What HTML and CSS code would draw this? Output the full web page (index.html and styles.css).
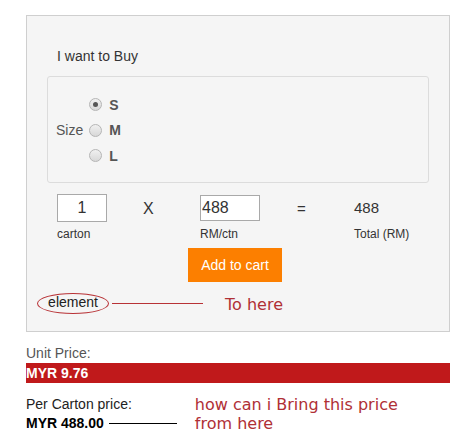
FILE: index.html
```html
<!DOCTYPE html>
<html lang="en">
<head>
    <meta charset="UTF-8">
    <meta name="viewport" content="width=device-width, initial-scale=1.0">
    <title>Buy Product</title>
    <link rel="stylesheet" href="styles.css">
</head>
<body>
    <div class="page">
        <div class="buy-box">
            <div class="buy-title">I want to Buy</div>

            <div class="options">
                <div class="size-group">
                    <span class="size-label">Size</span>
                    <div class="size-list">
                        <label class="size-item"><input type="radio" name="size" checked> S</label>
                        <label class="size-item"><input type="radio" name="size"> M</label>
                        <label class="size-item"><input type="radio" name="size"> L</label>
                    </div>
                </div>
            </div>

            <div class="calc">
                <div class="calc-cell cell-qty">
                    <input type="text" class="qty" value="1">
                    <span class="calc-note">carton</span>
                </div>
                <div class="calc-cell cell-op">X</div>
                <div class="calc-cell cell-rate">
                    <input type="text" class="rate" value="488">
                    <span class="calc-note">RM/ctn</span>
                </div>
                <div class="calc-cell cell-eq">=</div>
                <div class="calc-cell cell-total">
                    <span class="total">488</span>
                    <span class="calc-note">Total (RM)</span>
                </div>
            </div>

            <button class="add-cart">Add to cart</button>

            <div class="note-row">
                <span class="element-tag">element</span>
                <span class="arrow-line"></span>
                <span class="note">To here</span>
            </div>
        </div>

        <div class="unit-label">Unit Price:</div>
        <div class="unit-bar">MYR 9.76</div>

        <div class="carton">
            <div class="carton-left">
                <div class="carton-label">Per Carton price:</div>
                <div class="carton-value">
                    <span>MYR 488.00</span>
                    <span class="black-line"></span>
                </div>
            </div>
            <div class="note question">how can i Bring this price<br>from here</div>
        </div>
    </div>
</body>
</html>
```

FILE: styles.css
```css
body {
    margin: 0;
    padding: 0;
    background-color: #fff;
    font-family: "Liberation Sans", Arial, sans-serif;
    font-size: 14px;
    color: #333;
}

.page {
    padding: 15px 0 0 26px;
    width: 424px;
}

.buy-box {
    box-sizing: border-box;
    width: 424px;
    height: 317px;
    background-color: #f5f5f5;
    border: 1px solid #cfcfcf;
    padding: 31px 0 0 0;
}

.buy-title {
    margin-left: 30px;
    line-height: 18px;
    color: #333;
}

.options {
    box-sizing: border-box;
    margin: 11px 0 0 20px;
    width: 382px;
    height: 107px;
    border: 1px solid #dcdcdc;
    border-radius: 3px;
    padding: 15px 0 0 8px;
}

.size-group {
    display: flex;
    align-items: center;
}

.size-label {
    color: #555;
    margin-right: 6px;
}

.size-list {
    display: flex;
    flex-direction: column;
}

.size-item {
    display: flex;
    align-items: center;
    height: 25.5px;
    font-weight: bold;
    color: #555;
}

.size-item input {
    -webkit-appearance: none;
    appearance: none;
    width: 13px;
    height: 13px;
    margin: 0 7px 0 0;
    border: 1px solid #b5b5b5;
    border-radius: 50%;
    background: linear-gradient(#f0f0f0, #d8d8d8);
    box-sizing: border-box;
    position: relative;
}

.size-item input:checked::after {
    content: "";
    position: absolute;
    left: 3px;
    top: 3px;
    width: 5px;
    height: 5px;
    border-radius: 50%;
    background-color: #555;
}

.calc {
    display: flex;
    margin: 11px 0 0 30px;
}

.calc-cell {
    display: flex;
    flex-direction: column;
}

.cell-qty {
    width: 86px;
}

.cell-op {
    width: 57px;
    padding-top: 6px;
    font-size: 16px;
    color: #333;
}

.cell-rate {
    width: 97px;
}

.cell-eq {
    width: 57px;
    padding-top: 6px;
    font-size: 15px;
    color: #333;
}

.qty,
.rate {
    box-sizing: border-box;
    border: 1px solid #a9a9a9;
    background-color: #fff;
    font-family: "Liberation Sans", Arial, sans-serif;
    font-size: 16px;
    color: #333;
    margin: 0;
}

.qty {
    width: 50px;
    height: 28px;
    text-align: center;
}

.rate {
    width: 60px;
    height: 26px;
    margin-top: 1px;
    padding: 0 1px;
}

.total {
    height: 28px;
    line-height: 28px;
    font-size: 15px;
    color: #333;
}

.calc-note {
    font-size: 12px;
    margin-top: 5px;
    color: #333;
}

.rate + .calc-note {
    margin-top: 6px;
}

.add-cart {
    display: block;
    margin: 7px 0 0 161px;
    width: 94px;
    height: 34px;
    border: none;
    background-color: #fc7f00;
    color: #fff;
    font-family: "Liberation Sans", Arial, sans-serif;
    font-size: 14px;
    padding: 0;
}

.note-row {
    display: flex;
    align-items: center;
    margin: 11px 0 0 10px;
    height: 21px;
}

.element-tag {
    box-sizing: border-box;
    width: 72px;
    height: 21px;
    border: 1px solid #b83236;
    border-radius: 50%;
    text-align: center;
    line-height: 17px;
    color: #222;
}

.arrow-line {
    width: 91px;
    height: 1px;
    margin-left: 3px;
    background-color: #b83236;
}

.note {
    font-family: "DejaVu Sans", Verdana, sans-serif;
    font-size: 16px;
    color: #b03036;
}

.note-row .note {
    margin-left: 22px;
    margin-top: 2px;
}

.unit-label {
    margin-top: 13px;
    line-height: 16px;
    color: #555;
}

.unit-bar {
    width: 424px;
    height: 20px;
    margin-top: 2px;
    background-color: #c0191b;
    color: #fff;
    font-weight: bold;
    line-height: 20px;
}

.carton {
    display: flex;
    margin-top: 13px;
}

.carton-label {
    line-height: 16px;
    color: #222;
}

.carton-value {
    display: flex;
    align-items: center;
    margin-top: 3px;
    font-weight: bold;
    color: #000;
    line-height: 16px;
}

.black-line {
    width: 68px;
    height: 1px;
    margin-left: 5px;
    background-color: #000;
}

.question {
    margin-left: 18px;
    margin-top: -1px;
    line-height: 19px;
}
```
